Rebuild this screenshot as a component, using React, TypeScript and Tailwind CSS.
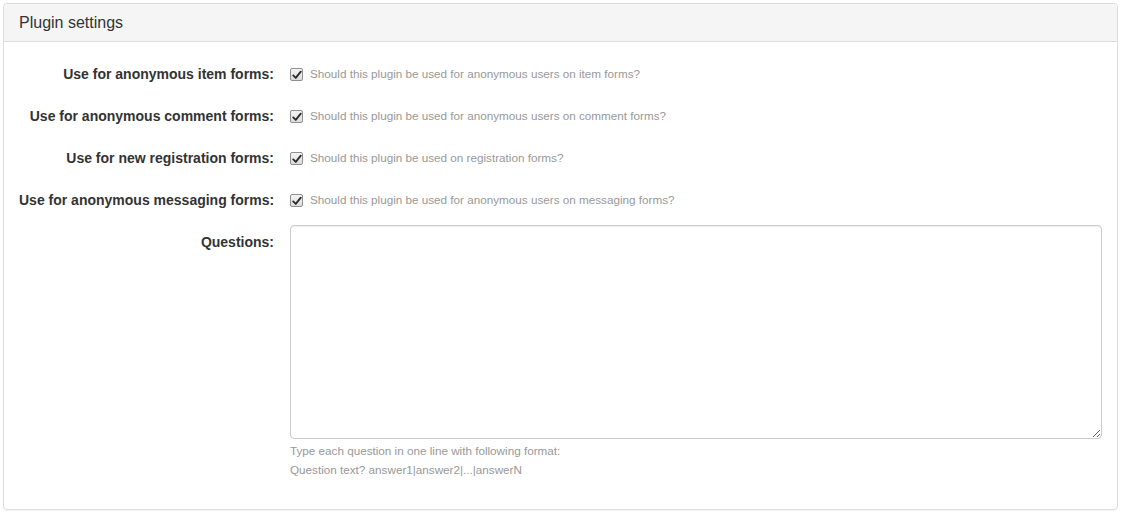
const rows = [
  { label: "Use for anonymous item forms:", help: "Should this plugin be used for anonymous users on item forms?" },
  { label: "Use for anonymous comment forms:", help: "Should this plugin be used for anonymous users on comment forms?" },
  { label: "Use for new registration forms:", help: "Should this plugin be used on registration forms?" },
  { label: "Use for anonymous messaging forms:", help: "Should this plugin be used for anonymous users on messaging forms?" },
];

function Check() {
  return (
    <span className="mt-[11px] flex h-[13px] w-[13px] shrink-0 items-center justify-center rounded-[2px] border border-[#8f8f8f] bg-[linear-gradient(#f4f4f4,#dcdcdc)]">
      <svg viewBox="0 0 12 12" className="h-[10px] w-[10px]">
        <path d="M1.5 6.5 L4.5 9.5 L10.5 2" fill="none" stroke="#2b2b2b" strokeWidth="2.2" strokeLinecap="round" strokeLinejoin="round" />
      </svg>
    </span>
  );
}

export default function App() {
  return (
    <div className="bg-white p-[3px] font-['Liberation_Sans',Arial,sans-serif] text-[14px] text-[#333]">
      <div className="w-[1115px] rounded-[4px] border border-[#ddd] shadow-[0_1px_1px_rgba(0,0,0,.05)]">
        <div className="rounded-t-[3px] border-b border-[#ddd] bg-[#f5f5f5] px-[15px] py-[9px] text-[16px] leading-[19px]">
          Plugin settings
        </div>
        <div className="px-[15px] pt-[15px] pb-[15px]">
          {rows.map((r) => (
            <div key={r.label} className="mb-[15px] flex h-[27px]">
              <label className="w-[255px] shrink-0 whitespace-nowrap pt-[7px] text-right font-bold leading-[20px]">{r.label}</label>
              <div className="ml-[16px] flex items-start">
                <Check />
                <span className="ml-[7px] pt-[7px] text-[11.7px] leading-[20px] text-[#999]">{r.help}</span>
              </div>
            </div>
          ))}
          <div className="mb-[15px] flex">
            <label className="w-[255px] shrink-0 pt-[7px] text-right font-bold leading-[20px]">Questions:</label>
            <div className="ml-[16px] flex-1">
              <textarea className="block h-[214px] w-[812px] rounded-[4px] border border-[#ccc] px-3 py-1.5 shadow-[inset_0_1px_1px_rgba(0,0,0,.075)] outline-none" />
              <div className="mt-[2px] text-[11.7px] leading-[19px] text-[#999]">
                <div>Type each question in one line with following format:</div>
                <div>Question text? answer1|answer2|...|answerN</div>
              </div>
            </div>
          </div>
        </div>
      </div>
    </div>
  );
}
